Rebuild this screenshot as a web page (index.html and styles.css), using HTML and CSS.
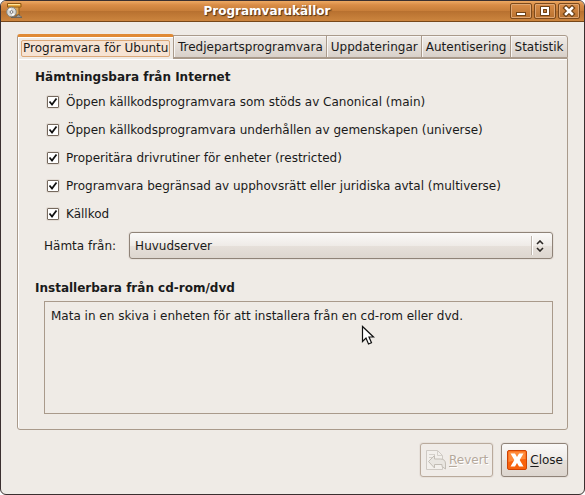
FILE: index.html
```html
<!DOCTYPE html>
<html lang="sv">
<head>
    <meta charset="UTF-8">
    <meta name="viewport" content="width=device-width, initial-scale=1.0">
    <title>Programvarukällor</title>
    <link rel="stylesheet" href="styles.css">
</head>
<body>

    <div class="window">
        <header class="titlebar">
            <svg class="app-icon" width="16" height="16" viewBox="0 0 16 16" aria-hidden="true">
                <path d="M4 3h9v9H4z" fill="#d9a050" stroke="#8f5a14"/>
                <path d="M1.500.500h13.500v3.500H1.500z" fill="#e9a93c" stroke="#8f5a14"/>
                <path d="M2 1.500h12" stroke="#ffe39a"/>
                <circle cx="5.500" cy="9" r="4.800" fill="#d9d9d6" stroke="#85857f"/>
                <path d="M2.500 6.500L5.500 9l-1-4zM8.500 11.500L5.500 9l1 4z" fill="#fff"/>
                <circle cx="5.500" cy="9" r="1.400" fill="#fff" stroke="#777"/>
                <path d="M5 14.500h11l-2-2-2-1-1.500 2z" fill="#9a9995" stroke="#5e5e5a" stroke-width=".8"/>
            </svg>
            <h1>Programvarukällor</h1>
            <div class="window-buttons">
                <button type="button" aria-label="Minimera">
                    <svg width="18" height="12" viewBox="0 0 18 12"><path d="M4 7h10v4H4z" fill="#6f4318"/><path d="M5 8h8v2H5z" fill="#fff"/></svg>
                </button>
                <button type="button" aria-label="Maximera">
                    <svg width="18" height="12" viewBox="0 0 18 12"><path d="M4.500 1.500h9v9h-9z" fill="#6f4318" stroke="#6f4318"/><path d="M6 3h6v6H6z" fill="#c57d3a" stroke="#fff" stroke-width="2"/><path d="M7.500 4.500h3v3h-3z" fill="none" stroke="#6f4318"/></svg>
                </button>
                <button type="button" aria-label="Stäng">
                    <svg width="18" height="12" viewBox="0 0 18 12"><path d="M6 3l6 6M12 3L6 9" stroke="#6f4318" stroke-width="5" stroke-linecap="square"/><path d="M6 3l6 6M12 3L6 9" stroke="#fff" stroke-width="2.600" stroke-linecap="square"/></svg>
                </button>
            </div>
        </header>

        <main class="content">
            <div class="tabs" role="tablist">
                <button type="button" class="tab active" role="tab" aria-selected="true"><span>Programvara för Ubuntu</span></button>
                <button type="button" class="tab" role="tab">Tredjepartsprogramvara</button>
                <button type="button" class="tab" role="tab">Uppdateringar</button>
                <button type="button" class="tab" role="tab">Autentisering</button>
                <button type="button" class="tab" role="tab">Statistik</button>
            </div>

            <section class="panel" role="tabpanel">
                <h2>Hämtningsbara från Internet</h2>
                <div class="group">
                    <label class="check"><input type="checkbox" checked>Öppen källkodsprogramvara som stöds av Canonical (main)</label>
                    <label class="check"><input type="checkbox" checked>Öppen källkodsprogramvara underhållen av gemenskapen (universe)</label>
                    <label class="check"><input type="checkbox" checked>Properitära drivrutiner för enheter (restricted)</label>
                    <label class="check"><input type="checkbox" checked>Programvara begränsad av upphovsrätt eller juridiska avtal (multiverse)</label>
                    <label class="check"><input type="checkbox" checked>Källkod</label>
                    <div class="server">
                        <label for="server">Hämta från:</label>
                        <div class="select-box">
                            <select id="server">
                                <option>Huvudserver</option>
                            </select>
                            <svg class="arrows" width="8" height="12" viewBox="0 0 8 12" aria-hidden="true"><path d="M1 4l3-3 3 3M1 8l3 3 3-3" fill="none" stroke="#2b2724" stroke-width="1.600"/></svg>
                        </div>
                    </div>
                </div>

                <h2>Installerbara från cd-rom/dvd</h2>
                <div class="disc-list">
                    Mata in en skiva i enheten för att installera från en cd-rom eller dvd.
                    <svg class="cursor" width="14" height="21" viewBox="0 0 14 21" aria-hidden="true"><path d="M1.500 1.500v15l3.500-3.500 2.500 6 3-1.300L8 12h4.500z" fill="#fff" stroke="#111" stroke-width="1.200"/></svg>
                </div>
            </section>

            <footer class="actions">
                <button type="button" class="action" disabled>
                    <svg width="22" height="22" viewBox="0 0 22 22" aria-hidden="true">
                        <path d="M1.500 1.500h11l5 5v14h-16z" fill="#f3f0ec" stroke="#cfcac4"/>
                        <path d="M12.500 1.500v5h5M4 5.500h6M4 8.500h5" fill="none" stroke="#d5d1cb"/>
                        <path d="M3.500 12.500l6-6v3.500h6q5 0 5 5v5l-3.500-2.500v-2h-7.500V19z" fill="#e9e6e1" stroke="#c2bdb5"/>
                    </svg>
                    <span><u>R</u>evert</span>
                </button>
                <button type="button" class="action">
                    <svg width="22" height="22" viewBox="0 0 22 22" aria-hidden="true">
                        <rect x="1.500" y="1.500" width="19" height="19" rx="1.500" fill="#f8620c" stroke="#cf4303"/>
                        <path d="M2.500 2.500h17V10q-8 0-17 3z" fill="#ff8a3a"/>
                        <path d="M4.500 4.500h4.500L11 8l2-3.500h4.500L13.700 11l3.800 6.500H13L11 14l-2 3.500H4.500L8.300 11z" fill="#fff"/>
                    </svg>
                    <span><u>C</u>lose</span>
                </button>
            </footer>
        </main>
    </div>

</body>
</html>
```
FILE: styles.css
```css
:root {
    --window-bg: #efebe6;
    --frame: #3b3030;
    --border: #a99a8b;
    --dark-border: #8f8378;
    --text: #1a1a1a;
    --button-bg: linear-gradient(#faf9f8, #efebe7 50%, #e6e0da 51%, #ddd6cf);
}

* {
    box-sizing: border-box;
}

body {
    margin: 0;
    background: #fff;
    color: var(--text);
    font-family: "DejaVu Sans", sans-serif;
    font-size: 12px;
    line-height: 16px;
}

button, select {
    font: inherit;
    color: inherit;
}

.window {
    display: flex;
    flex-direction: column;
    min-height: 100vh;
    background: var(--window-bg);
    border: 1px solid var(--frame);
    border-radius: 6px;
    overflow: hidden;
}

/* Title bar */
.titlebar {
    display: grid;
    grid-template-columns: 18px 1fr 70px;
    align-items: center;
    height: 21px;
    padding: 0 4px 0 5px;
    background: linear-gradient(#eda963, #d98c46 20%, #c87e39 48%, #b87130 52%, #cc853e);
    border-bottom: 1px solid #774719;
}

.titlebar h1 {
    margin: 0;
    color: #fff;
    font-size: 12px;
    text-align: center;
    text-shadow: 1px 1px 1px #4d3216;
}

.window-buttons {
    display: flex;
    justify-content: flex-end;
    gap: 2px;
}

.window-buttons button {
    display: grid;
    place-items: center;
    width: 22px;
    height: 16px;
    padding: 0;
    background: linear-gradient(#d98d48, #b8712f);
    border: 1px solid #7c4a1c;
    border-radius: 2px;
    box-shadow: inset 0 0 0 1px #dfa672;
}

/* Tabs */
.content {
    display: flex;
    flex: 1;
    flex-direction: column;
    padding: 12px 16px 17px;
}

.tabs {
    display: flex;
    align-items: flex-end;
}

.tab {
    flex: 1 0 auto;
    height: 23px;
    margin-left: -1px;
    padding: 0 3px;
    background: linear-gradient(#efebe7, #e4ded8 50%, #d8d0c9);
    border: 1px solid var(--border);
    box-shadow: inset 1px 1px #f8f6f4;
    white-space: nowrap;
}

.tab:last-child {
    border-top-right-radius: 3px;
}

.tab.active {
    position: relative;
    flex-grow: 0;
    height: 25px;
    margin: 0 0 -1px;
    padding: 0 3px;
    background: var(--window-bg);
    border-top: 3px solid #e08a35;
    border-bottom: 0;
    border-radius: 3px 3px 0 0;
    box-shadow: inset 1px 1px #fff;
}

.tab.active span {
    display: block;
    height: 17px;
    padding: 0 1px;
    line-height: 14px;
    background: #f6e3d3;
    border: 1px solid #dca878;
    border-radius: 2px;
}

.panel {
    display: flex;
    flex: 1;
    flex-direction: column;
    padding: 10px 14px 15px 17px;
    border: 1px solid var(--border);
    border-radius: 0 0 3px 3px;
    box-shadow: inset 1px 1px #fff;
}

h2 {
    margin: 0;
    font-size: 12px;
}

/* Options */
.group {
    padding: 3px 0 21px 9px;
}

.check {
    display: flex;
    align-items: center;
    gap: 7px;
    height: 28px;
    padding-left: 3px;
}

.check input {
    appearance: none;
    width: 12px;
    height: 12px;
    margin: 0;
    background: #fff url("data:image/svg+xml,%3Csvg xmlns='http://www.w3.org/2000/svg' viewBox='0 0 10 10'%3E%3Cpath d='M1.500 4.500L4 7.500L8.500 1.500' fill='none' stroke='%23111' stroke-width='1.800'/%3E%3C/svg%3E") center / 10px 10px no-repeat;
    border: 1px solid #75695e;
    border-radius: 1px;
    box-shadow: 0 0 0 1px #e3dcd5;
}

.server {
    display: flex;
    align-items: center;
    gap: 13px;
    padding-top: 4px;
}

.select-box {
    display: grid;
    flex: 1;
    align-items: center;
}

.select-box > * {
    grid-area: 1 / 1;
}

.select-box select {
    appearance: none;
    width: 100%;
    height: 27px;
    padding: 0 24px 0 5px;
    background:
        linear-gradient(#bdb5ad, #bdb5ad) right 20px center / 1px 19px no-repeat,
        linear-gradient(#fff, #fff) right 19px center / 1px 19px no-repeat,
        var(--button-bg);
    border: 1px solid var(--dark-border);
    border-radius: 3px;
    box-shadow: 0 0 0 1px #e7e1db;
}

.arrows {
    justify-self: end;
    margin-right: 9px;
    pointer-events: none;
}

.disc-list {
    position: relative;
    flex: 1;
    margin: 5px 0 0 9px;
    padding: 6px;
    border: 1px solid var(--border);
}

/* Mouse pointer over the list */
.cursor {
    position: absolute;
    top: 23px;
    left: 316px;
}

/* Bottom buttons */
.actions {
    display: flex;
    justify-content: flex-end;
    gap: 8px;
    padding-top: 13px;
}

.action {
    display: flex;
    align-items: center;
    gap: 2px;
    height: 34px;
    padding: 0 4px;
    background: var(--button-bg);
    border: 1px solid var(--dark-border);
    border-radius: 3px;
    box-shadow: 0 0 0 1px #e7e1db;
}

.action u {
    text-underline-offset: 2px;
}

.action:disabled {
    color: #b5a99c;
    background: #f0ece8;
    border-color: #b9aa9c;
    text-shadow: 1px 1px #fff;
}
```
